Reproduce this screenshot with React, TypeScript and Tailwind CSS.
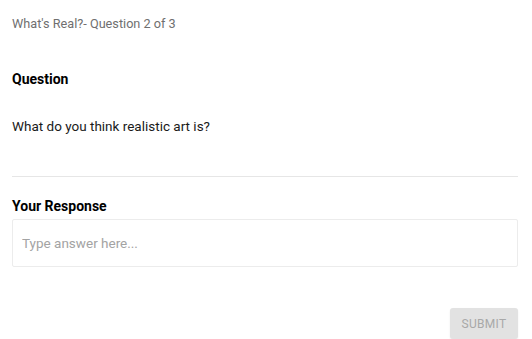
export default function App() {
  return (
    <div className="w-[532px] h-[339px] bg-white px-3 font-['Roboto',sans-serif] overflow-hidden">
      <div className="pt-[15px] text-[12.7px] leading-[18px] text-[#6f6f6f]">What's Real?- Question 2 of 3</div>

      <h2 className="mt-[36px] text-[14px] leading-[20px] font-bold text-black">Question</h2>
      <p className="mt-[27px] text-[13.5px] leading-[20px] text-[#1a1a1a]">What do you think realistic art is?</p>

      <div className="mt-[40px] mr-[2px] h-px bg-[#e6e6e6]" />

      <h2 className="mt-[19px] text-[14px] leading-[20px] font-bold text-black">Your Response</h2>
      <div className="mt-[3px] mr-[2px] h-[48px] border border-[#ececec] rounded-[2px] flex items-center px-[9px]">
        <input
          className="w-full outline-none text-[13.5px] text-[#333] placeholder:text-[#a3a3a3] bg-transparent"
          placeholder="Type answer here..."
        />
      </div>

      <div className="flex justify-end mt-[41px] mr-[2px]">
        <button className="w-[68px] h-[31px] bg-[#e2e2e2] rounded-[3px] text-[12px] tracking-[0.3px] text-[#a8a8a8] shadow-[0_1px_2px_rgba(0,0,0,0.08)]">
          SUBMIT
        </button>
      </div>
    </div>
  );
}
